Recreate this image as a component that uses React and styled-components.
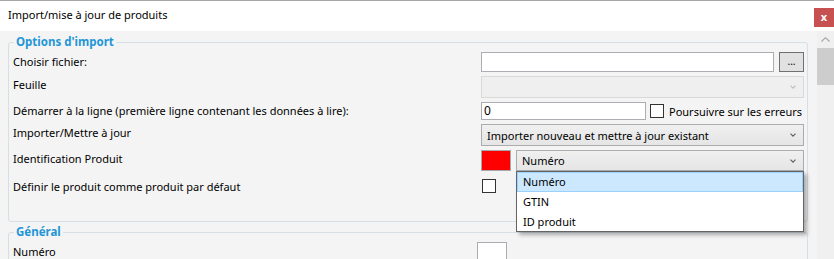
import styled, { createGlobalStyle } from "styled-components"

const GlobalStyle = createGlobalStyle`
  html, body {
    margin: 0;
    padding: 0;
    background: #f4f4f4;
  }
  body {
    font-family: "Noto Sans", "Segoe UI", sans-serif;
    font-size: 11px;
    color: #000;
  }
`

const Window = styled.div`
  width: 834px;
  height: 259px;
  overflow: hidden;
  border-top: 1px solid #a7a7a7;
  box-sizing: border-box;
  display: flex;
  flex-direction: column;
`
const TitleBar = styled.div`
  height: 30px;
  flex: none;
  background: #fff;
  display: flex;
  justify-content: space-between;
  padding-left: 8px;
`
const Title = styled.div`
  line-height: 30px;
  margin-top: -1px;
`
const CloseButton = styled.div`
  width: 20px;
  height: 19px;
  margin-top: 7px;
  background: #c75050;
  color: #fff;
  font-weight: bold;
  font-size: 11px;
  display: flex;
  align-items: center;
  justify-content: center;
  padding-bottom: 2px;
  box-sizing: border-box;
`
const Body = styled.div`
  flex: 1;
  display: flex;
  min-height: 0;
`
const Content = styled.div`
  flex: 1;
  min-width: 0;
  padding: 3px 9px 0 8px;
`
const Scrollbar = styled.div`
  width: 17px;
  flex: none;
  background: #f0f0f0;
  display: flex;
  flex-direction: column;
  align-items: stretch;
`
const ScrollArrow = styled.div`
  height: 17px;
  display: flex;
  align-items: center;
  justify-content: center;
`
const ScrollThumb = styled.div`
  height: 37px;
  background: #cdcdcd;
`
const Group = styled.fieldset`
  min-width: 0;
  margin: ${(p) => p.$top || 0}px 0 0 0;
  padding: 0 3px ${(p) => p.$pad || 0}px 4px;
  border: 1px solid #d5dfe6;
  border-radius: 3px;
`
const Legend = styled.legend`
  padding: 0 2px;
  margin-left: 1px;
  line-height: 16px;
  font-size: 11.5px;
  font-weight: bold;
  color: #1e96d7;
`
const Rows = styled.div`
  display: flex;
  flex-direction: column;
  gap: 4px;
  margin-top: 2px;
`
const Row = styled.div`
  display: grid;
  grid-template-columns: ${(p) => p.$label || 468}px minmax(0, 1fr);
  height: ${(p) => p.$h}px;
`
const Label = styled.div`
  line-height: 18px;
  margin-top: ${(p) => p.$dy || 0}px;
  white-space: nowrap;
`
const Controls = styled.div`
  display: flex;
  align-items: ${(p) => p.$align || "stretch"};
  gap: ${(p) => p.$gap || 0}px;
  position: relative;
  min-width: 0;
`
const TextBox = styled.div`
  box-sizing: border-box;
  border: 1px solid #abadb3;
  background: #fff;
  flex: ${(p) => (p.$w ? "none" : 1)};
  width: ${(p) => (p.$w ? p.$w + "px" : "auto")};
  padding-left: 2px;
  line-height: 16px;
  font-size: 12px;
`
const Browse = styled.div`
  width: 25px;
  flex: none;
  box-sizing: border-box;
  border: 1px solid #707070;
  background: #e1e1e1;
  text-align: center;
  font-size: 10px;
  line-height: 16px;
`
const Select = styled.div`
  flex: 1;
  min-width: 0;
  position: relative;
  box-sizing: border-box;
  border: 1px solid ${(p) => (p.$disabled ? "#d9d9d9" : "#acacac")};
  background: ${(p) =>
    p.$disabled ? "#efefef" : "linear-gradient(#f0f0f0, #e5e5e5)"};
  display: flex;
  align-items: center;
  justify-content: space-between;
  padding: 0 7px 0 5px;
`
const Swatch = styled.div`
  width: 30px;
  flex: none;
  box-sizing: border-box;
  border: 1px solid #a8a8a8;
  background: #ff0000;
`
const Check = styled.div`
  width: 14px;
  height: 14px;
  box-sizing: border-box;
  border: 1px solid #333;
  background: #fff;
  flex: none;
  margin: ${(p) => p.$m || 0};
`
const CheckText = styled.span`
  margin-left: 5px;
  white-space: nowrap;
`
const DropList = styled.div`
  position: absolute;
  top: calc(100% + 1px);
  left: -1px;
  right: -1px;
  height: 61px;
  box-sizing: border-box;
  border: 1px solid #646464;
  background: #fff;
  box-shadow: 3px 3px 4px rgba(0, 0, 0, 0.3);
  z-index: 2;
`
const Option = styled.div`
  height: 20px;
  box-sizing: border-box;
  line-height: 18px;
  padding-left: 5px;
  border: 1px solid ${(p) => (p.$active ? "#99d1ff" : "transparent")};
  background: ${(p) => (p.$active ? "#cce8ff" : "transparent")};
`

const Chevron = ({ color = "#606060" }) => (
  <svg width="6" height="4" viewBox="0 0 6 4">
    <polyline points="0.5,0.6 3,3.2 5.5,0.6" fill="none" stroke={color} strokeWidth="1.1" />
  </svg>
)

const App = () => {
  return (
    <>
      <GlobalStyle />
      <Window>
        <TitleBar>
          <Title>Import/mise à jour de produits</Title>
          <CloseButton>x</CloseButton>
        </TitleBar>
        <Body>
          <Content>
            <Group $pad={26}>
              <Legend>Options d'import</Legend>
              <Rows>
                <Row $h={20}>
                  <Label $dy={1}>Choisir fichier:</Label>
                  <Controls $gap={5}>
                    <TextBox />
                    <Browse>...</Browse>
                  </Controls>
                </Row>
                <Row $h={22}>
                  <Label>Feuille</Label>
                  <Controls>
                    <Select $disabled>
                      <span />
                      <Chevron color="#c0c0c0" />
                    </Select>
                  </Controls>
                </Row>
                <Row $h={18}>
                  <Label>Démarrer à la ligne (première ligne contenant les données à lire):</Label>
                  <Controls $align="center">
                    <TextBox $w={165}>0</TextBox>
                    <Check $m="0 0 0 4px" />
                    <CheckText>Poursuivre sur les erreurs</CheckText>
                  </Controls>
                </Row>
                <Row $h={22}>
                  <Label>Importer/Mettre à jour</Label>
                  <Controls>
                    <Select>
                      <span>Importer nouveau et mettre à jour existant</span>
                      <Chevron />
                    </Select>
                  </Controls>
                </Row>
                <Row $h={21}>
                  <Label>Identification Produit</Label>
                  <Controls $gap={5}>
                    <Swatch />
                    <Select>
                      <span>Numéro</span>
                      <Chevron />
                      <DropList>
                        <Option $active>Numéro</Option>
                        <Option>GTIN</Option>
                        <Option>ID produit</Option>
                      </DropList>
                    </Select>
                  </Controls>
                </Row>
                <Row $h={20}>
                  <Label $dy={3}>Définir le produit comme produit par défaut</Label>
                  <Controls $align="flex-start">
                    <Check $m="4px 0 0 1px" />
                  </Controls>
                </Row>
              </Rows>
            </Group>
            <Group $top={2}>
              <Legend>Général</Legend>
              <Rows>
                <Row $h={20} $label={464}>
                  <Label $dy={1}>Numéro</Label>
                  <Controls>
                    <TextBox $w={30} />
                  </Controls>
                </Row>
              </Rows>
            </Group>
          </Content>
          <Scrollbar>
            <ScrollArrow>
              <svg width="9" height="5" viewBox="0 0 9 5">
                <polyline points="0.5,4.5 4.5,0.7 8.5,4.5" fill="none" stroke="#a3a3a3" strokeWidth="1.1" />
              </svg>
            </ScrollArrow>
            <ScrollThumb />
          </Scrollbar>
        </Body>
      </Window>
    </>
  )
}

export default App
